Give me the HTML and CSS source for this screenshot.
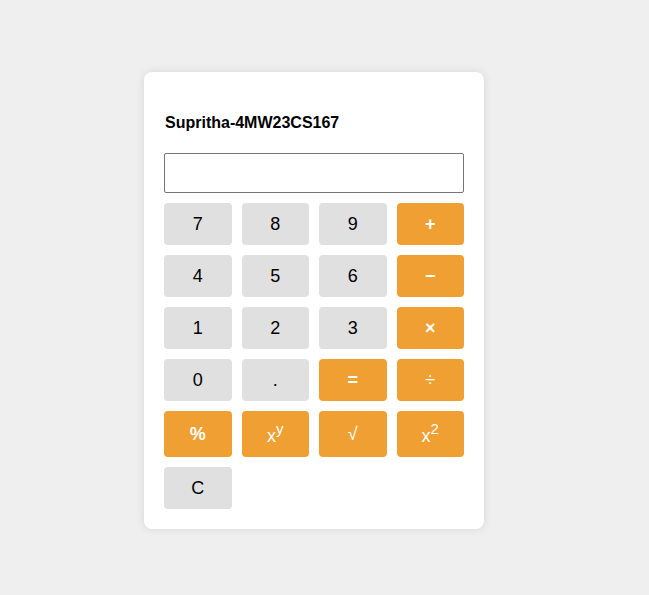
FILE: index.html
```html
<!DOCTYPE html>
<html>
<head>
<meta charset="utf-8">
<link rel="stylesheet" href="styles.css">
</head>
<body>
<div class="calc">
  <h4 class="title">Supritha-4MW23CS167</h4>
  <input class="display" type="text">
  <div class="keys">
    <button class="key">7</button>
    <button class="key">8</button>
    <button class="key">9</button>
    <button class="key op bold">+</button>
    <button class="key">4</button>
    <button class="key">5</button>
    <button class="key">6</button>
    <button class="key op bold">−</button>
    <button class="key">1</button>
    <button class="key">2</button>
    <button class="key">3</button>
    <button class="key op bold">×</button>
    <button class="key">0</button>
    <button class="key">.</button>
    <button class="key op bold">=</button>
    <button class="key op">÷</button>
    <button class="key op bold">%</button>
    <button class="key op">x<sup>y</sup></button>
    <button class="key op">√</button>
    <button class="key op">x<sup>2</sup></button>
    <button class="key">C</button>
  </div>
</div>
</body>
</html>
```
FILE: styles.css
```css
html, body {
  margin: 0;
  padding: 0;
}
body {
  background: #efefef;
  font-family: "Liberation Sans", Arial, sans-serif;
  min-height: 595px;
  padding-top: 72px;
  padding-left: 144px;
  box-sizing: border-box;
}
.calc {
  width: 300px;
  padding: 20px;
  background: #fff;
  border-radius: 8px;
  box-shadow: 0 0 10px rgba(0,0,0,0.1);
}
.title {
  font-size: 16px;
  font-weight: bold;
  margin: 22px 0 21px 1px;
  color: #000;
}
.display {
  display: block;
  width: 300px;
  height: 40px;
  box-sizing: border-box;
  border: 1px solid #767676;
  border-radius: 2px;
  margin: 0 0 10px 0;
  font-size: 18px;
  padding: 0 8px;
}
.keys {
  display: grid;
  grid-template-columns: repeat(4, 1fr);
  gap: 10px;
}
.key {
  font-family: "Liberation Sans", Arial, sans-serif;
  font-size: 18px;
  padding: 10px 0;
  border: none;
  border-radius: 4px;
  background: #e0e0e0;
  color: #000;
  line-height: 22px;
}
.key.op {
  background: #f0a032;
  color: #fff;
}
.key.bold {
  font-weight: bold;
}
.key sup {
  font-size: 15px;
  line-height: 1;
  vertical-align: 8px;
}
```
